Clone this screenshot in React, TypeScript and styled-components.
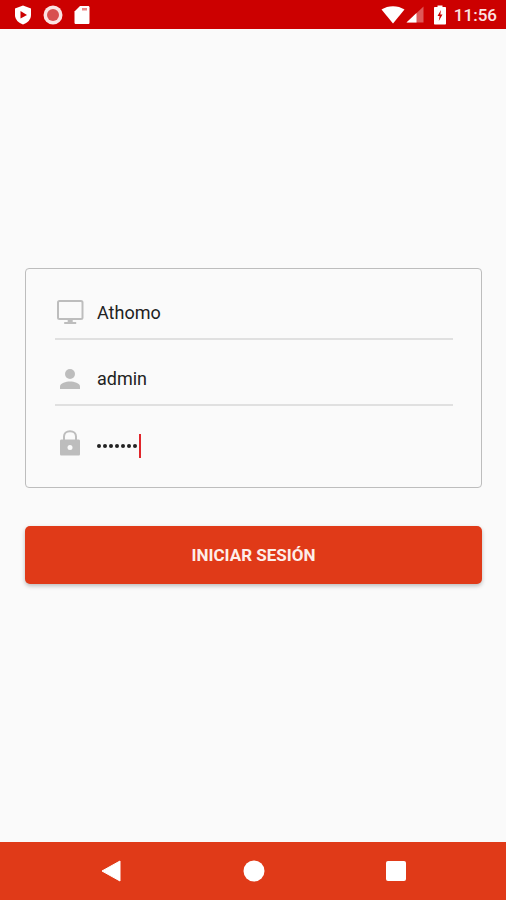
import React from 'react';
import styled, { createGlobalStyle } from 'styled-components';

const GlobalStyle = createGlobalStyle`
  html, body {
    margin: 0;
    padding: 0;
    background-color: #fafafa;
    font-family: Roboto, "Liberation Sans", sans-serif;
  }
`;

const Screen = styled.div`
  width: 506px;
  height: 900px;
  display: flex;
  flex-direction: column;
  overflow: hidden;
  background-color: #fafafa;
`;

const StatusBar = styled.header`
  height: 29px;
  flex-shrink: 0;
  background-color: #cc0000;
  display: flex;
  align-items: center;
  justify-content: space-between;
  padding: 0 9px 0 14px;
  box-sizing: border-box;
  color: white;
`;

const StatusGroup = styled.div<{ $gap?: number }>`
  display: flex;
  align-items: center;
  gap: ${p => p.$gap || 0}px;
`;

const Clock = styled.span`
  font-size: 17px;
  font-weight: 500;
  margin-left: 8px;
  color: #fbe3e3;
`;

const SignalSvg = styled.svg`
  margin: 0 10px 0 1px;
`;

const Content = styled.main`
  flex: 1;
  padding: 239px 24px 0 25px;
`;

const Card = styled.section`
  height: 220px;
  border: 1px solid #bdbdbd;
  border-radius: 4px;
  box-sizing: border-box;
  padding: 4px 28px 0 29px;
`;

const Row = styled.div<{ $last?: boolean }>`
  height: 66.5px;
  box-sizing: border-box;
  display: flex;
  align-items: center;
  padding-top: 14px;
  border-bottom: ${p => (p.$last ? 'none' : '2px solid #e0e0e0')};
`;

const IconSlot = styled.div<{ $raise?: number }>`
  width: 42px;
  flex-shrink: 0;
  display: flex;
  align-items: center;
  padding-left: 1px;
  padding-bottom: ${p => p.$raise || 0}px;
  box-sizing: border-box;
`;

const Value = styled.span`
  font-size: 18px;
  color: #222;
`;

const Dots = styled.span`
  display: flex;
  align-items: center;
  gap: 2px;
`;

const Dot = styled.i`
  width: 4px;
  height: 4px;
  border-radius: 50%;
  background-color: #222;
`;

const Caret = styled.span`
  width: 2px;
  height: 24px;
  margin-left: 2px;
  background-color: #e0252b;
`;

const SubmitButton = styled.button`
  display: block;
  width: 100%;
  height: 58px;
  margin-top: 38px;
  border: none;
  border-radius: 5px;
  background-color: #e03a18;
  box-shadow: 0 2px 4px rgba(0, 0, 0, 0.25);
  color: #fdeee9;
  font-family: Roboto, "Liberation Sans", sans-serif;
  font-size: 17px;
  font-weight: 700;
  padding: 0;
`;

const NavBar = styled.nav`
  height: 58px;
  flex-shrink: 0;
  background-color: #e03a18;
  display: flex;
  align-items: center;
  justify-content: space-between;
  padding: 0 100px 0 101px;
  box-sizing: border-box;
`;

function ShieldIcon() {
  return (
    <svg width="18" height="20" viewBox="0 0 18 20">
      <path d="M9 0.5 L17 3.5 V10 C17 14.5 13.5 18 9 19.5 C4.5 18 1 14.5 1 10 V3.5 Z" fill="white" />
      <path d="M6.5 6 L13 10 L6.5 13.5 Z" fill="#cc0000" />
    </svg>
  );
}

function RecordIcon() {
  return (
    <svg width="20" height="20" viewBox="0 0 20 20">
      <circle cx="10" cy="10" r="9.5" fill="#fbe3e3" />
      <circle cx="10" cy="10" r="6" fill="#d85050" />
    </svg>
  );
}

function SdCardIcon() {
  return (
    <svg width="16" height="20" viewBox="0 0 16 20">
      <path d="M6 1 H14 C15 1 15.5 1.6 15.5 2.5 V17.5 C15.5 18.6 15 19 14 19 H2 C1 19 0.5 18.6 0.5 17.5 V6.5 Z" fill="white" />
      <rect x="8" y="3" width="5" height="2.5" fill="#e88" />
    </svg>
  );
}

function WifiIcon() {
  return (
    <svg width="24" height="18" viewBox="0 0 24 18">
      <path d="M0.5 3.5 C7 -1 17 -1 23.5 3.5 L12 17.5 Z" fill="white" />
    </svg>
  );
}

function SignalIcon() {
  return (
    <SignalSvg width="18" height="17" viewBox="0 0 18 17">
      <path d="M17.5 0.5 V16.5 H0.5 Z" fill="white" fillOpacity="0.35" />
      <path d="M10.5 7 V16.5 H0.5 Z" fill="white" />
    </SignalSvg>
  );
}

function BatteryIcon() {
  return (
    <svg width="12" height="20" viewBox="0 0 12 20">
      <path d="M3.5 0.5 H8.5 V2 H11 C11.6 2 12 2.4 12 3 V18.5 C12 19.2 11.6 19.5 11 19.5 H1 C0.4 19.5 0 19.2 0 18.5 V3 C0 2.4 0.4 2 1 2 H3.5 Z" fill="white" />
      <path d="M7 5 L3.5 11 H5.6 L4.8 16 L8.5 9.5 H6.3 Z" fill="#cc0000" />
    </svg>
  );
}

function MonitorIcon() {
  return (
    <svg width="28" height="25" viewBox="0 0 28 25">
      <rect x="2" y="1" width="24.5" height="18" rx="1.5" fill="none" stroke="#bdbdbd" strokeWidth="2" />
      <rect x="11.7" y="19" width="5" height="3" fill="#bdbdbd" />
      <rect x="8.2" y="22" width="12" height="2" fill="#bdbdbd" />
    </svg>
  );
}

function PersonIcon() {
  return (
    <svg width="26" height="22" viewBox="0 0 26 22">
      <circle cx="14" cy="6" r="5" fill="#bdbdbd" />
      <path d="M4 21 V18.5 C4 15 10 13.5 14 13.5 C18 13.5 24 15 24 18.5 V21 Z" fill="#bdbdbd" />
    </svg>
  );
}

function LockIcon() {
  return (
    <svg width="26" height="28" viewBox="0 0 26 28">
      <path d="M8 11 V7.5 C8 4.5 10.2 2.2 14 2.2 C17.8 2.2 20 4.5 20 7.5 V11" fill="none" stroke="#bdbdbd" strokeWidth="2" />
      <path d="M5.5 10.5 H22.5 C23.4 10.5 24 11 24 12 V25 C24 26 23.4 26.5 22.5 26.5 H5.5 C4.6 26.5 4 26 4 25 V12 C4 11 4.6 10.5 5.5 10.5 Z" fill="#bdbdbd" />
      <circle cx="14" cy="18.5" r="2.5" fill="#fafafa" />
    </svg>
  );
}

function BackIcon() {
  return (
    <svg width="20" height="22" viewBox="0 0 20 22">
      <path d="M19 1 V21 L1 11 Z" fill="white" stroke="white" strokeLinejoin="round" />
    </svg>
  );
}

function HomeIcon() {
  return (
    <svg width="22" height="22" viewBox="0 0 22 22">
      <circle cx="11" cy="11" r="10.5" fill="white" />
    </svg>
  );
}

function RecentsIcon() {
  return (
    <svg width="20" height="20" viewBox="0 0 20 20">
      <rect width="20" height="20" rx="2" fill="white" />
    </svg>
  );
}

export default function App() {
  return (
    <>
      <GlobalStyle />
      <Screen>
        <StatusBar>
          <StatusGroup $gap={11}>
            <ShieldIcon />
            <RecordIcon />
            <SdCardIcon />
          </StatusGroup>
          <StatusGroup>
            <WifiIcon />
            <SignalIcon />
            <BatteryIcon />
            <Clock>11:56</Clock>
          </StatusGroup>
        </StatusBar>
        <Content>
          <Card>
            <Row>
              <IconSlot>
                <MonitorIcon />
              </IconSlot>
              <Value>Athomo</Value>
            </Row>
            <Row>
              <IconSlot>
                <PersonIcon />
              </IconSlot>
              <Value>admin</Value>
            </Row>
            <Row $last>
              <IconSlot $raise={6}>
                <LockIcon />
              </IconSlot>
              <Dots>
                {Array.from({ length: 7 }).map((_, i) => (
                  <Dot key={i} />
                ))}
              </Dots>
              <Caret />
            </Row>
          </Card>
          <SubmitButton>INICIAR SESIÓN</SubmitButton>
        </Content>
        <NavBar>
          <BackIcon />
          <HomeIcon />
          <RecentsIcon />
        </NavBar>
      </Screen>
    </>
  );
}
